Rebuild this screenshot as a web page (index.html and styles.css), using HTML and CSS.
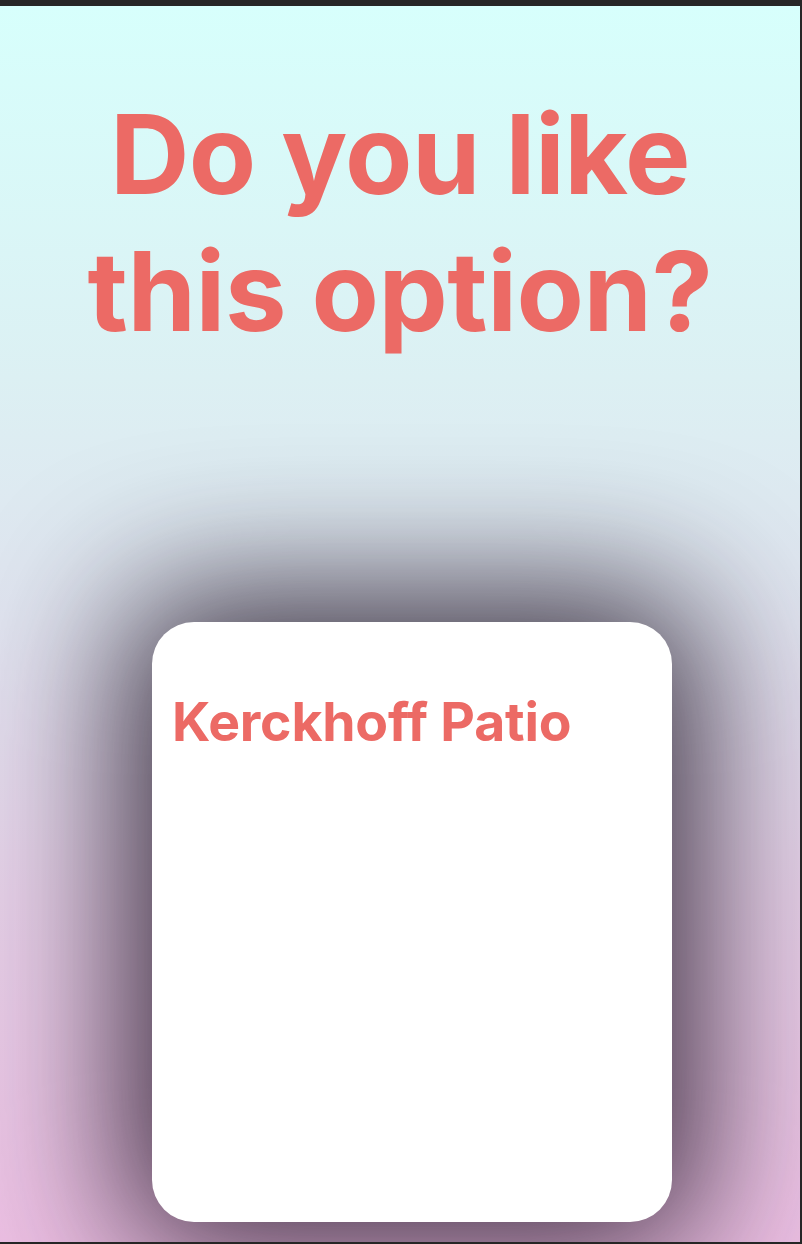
FILE: index.html
```html
<!DOCTYPE html>
<html>
<head>
<meta charset="utf-8">
<link rel="stylesheet" href="styles.css">
</head>
<body>
<div class="frame">
  <main class="screen">
    <h1 class="question">Do you like this option?</h1>
    <section class="card">
      <h2 class="card-title">Kerckhoff Patio</h2>
    </section>
  </main>
</div>
</body>
</html>
```

FILE: styles.css
```css
html, body {
  margin: 0;
  padding: 0;
  background: #262626;
}
.frame {
  padding: 6px 2px 2px 0;
  width: 800px;
  height: 1236px;
}
.screen {
  width: 800px;
  height: 1236px;
  overflow: hidden;
  background: linear-gradient(180deg, #d7fffc 0%, #dcf0f3 30%, #e0e3ef 50%, #e6d0e8 72%, #ecbfe3 100%);
  display: flex;
  flex-direction: column;
  align-items: flex-start;
  font-family: Inter, "Noto Sans", sans-serif;
}
.question {
  align-self: center;
  max-width: 700px;
  margin: 80px 0 0 0;
  text-align: center;
  font-size: 110px;
  line-height: 137px;
  font-weight: 700;
  letter-spacing: -0.5px;
  color: #ec6a65;
}
.card {
  margin: 262px 0 0 152px;
  width: 520px;
  height: 600px;
  border-radius: 42px;
  background: #ffffff;
  box-shadow: 0 0 140px 30px rgba(22, 12, 28, 0.8);
  padding: 71px 22px 0 20px;
  box-sizing: border-box;
}
.card-title {
  margin: 0;
  font-size: 53.5px;
  line-height: 58px;
  font-weight: 700;
  letter-spacing: -0.2px;
  color: #ec6a65;
}
```
